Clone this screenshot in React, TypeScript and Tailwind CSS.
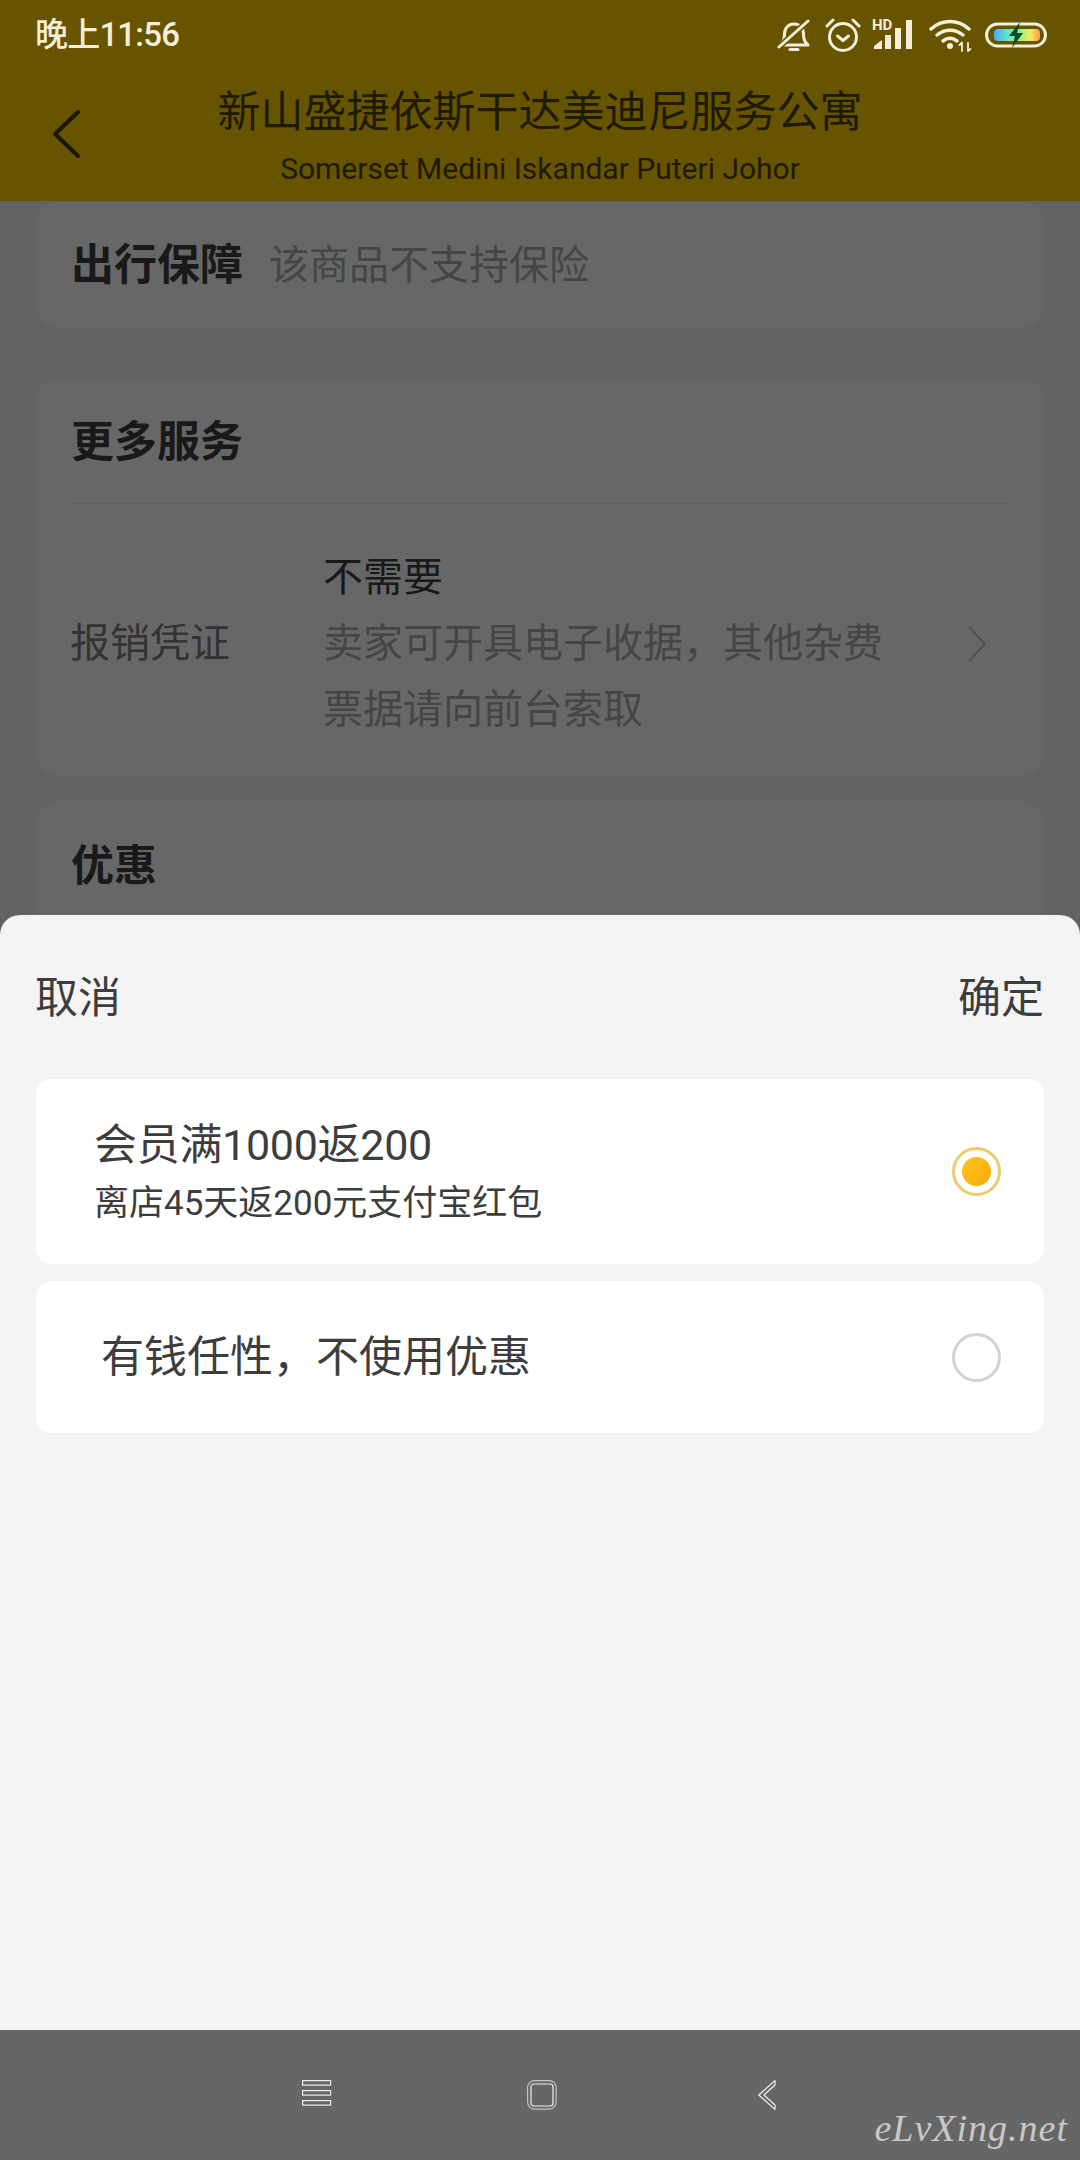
const cjk = "font-['Roboto','Noto_Sans_CJK_SC',sans-serif]";

function StatusIcons() {
  return (
    <div className="flex items-center">
      {/* muted bell */}
      <svg width="34" height="34" viewBox="0 0 34 34" fill="none" stroke="#f5eeda" strokeWidth="3" strokeLinecap="round" strokeLinejoin="round" className="mr-[14px]">
        <path d="M3 27h28c-3-3-4.500-5-4.500-11 0-6-4-10-9.500-10-5.500 0-9.500 4-9.500 10 0 6-1.500 8-4.500 11z" />
        <path d="M13 31.500h8" />
        <path d="M2 29L31 3" stroke="#665400" strokeWidth="6" />
        <path d="M2 29L31 3" />
      </svg>
      {/* alarm */}
      <svg width="36" height="36" viewBox="0 0 36 36" fill="none" stroke="#f5eeda" strokeWidth="3" strokeLinecap="round" strokeLinejoin="round" className="mr-[10px]">
        <circle cx="18" cy="20" r="13.500" />
        <path d="M12.500 19l5.500 4.500 5.500-4.500" />
        <path d="M2 9l6-6M34 9l-6-6" />
      </svg>
      {/* HD + signal, with a taller box so the label has room */}
      <svg width="44" height="48" viewBox="0 -8 44 48" fill="#f5eeda" className="mr-[14px]">
        <text x="1" y="11" fontSize="15" fontWeight="700" fontFamily="Roboto, sans-serif">HD</text>
        <path d="M3 30v-3l8-6v9z" />
        <rect x="14" y="16" width="6" height="14" />
        <rect x="24" y="9" width="6" height="21" />
        <rect x="35" y="1" width="6" height="29" />
      </svg>
      {/* wifi */}
      <svg width="44" height="34" viewBox="0 0 44 34" fill="none" stroke="#f5eeda" strokeWidth="3.500" strokeLinecap="round" className="mr-[12px]">
        <path d="M2 11C13 1 29 1 40 11" />
        <path d="M8 17c8-6.500 18-6.500 26 0" />
        <path d="M14 23c4.500-3.500 9.500-3.500 14 0" />
        <circle cx="21" cy="28" r="3" fill="#f5eeda" stroke="none" />
        <path d="M33 33v-8M30.500 27l2.500-2.500M39 25v8M41.500 31L39 33" strokeWidth="1.800" />
      </svg>
      {/* battery */}
      <svg width="62" height="28" viewBox="0 0 62 28" fill="none">
        <defs>
          <linearGradient id="batteryFill" x1="0" y1="0" x2="1" y2="0">
            <stop offset="0" stopColor="#4aa8f0" />
            <stop offset="0.3" stopColor="#63e6d0" />
            <stop offset="0.55" stopColor="#8ff27c" />
            <stop offset="0.8" stopColor="#fbe65e" />
            <stop offset="1" stopColor="#f59a4c" />
          </linearGradient>
        </defs>
        <rect x="1.500" y="3" width="59" height="22" rx="11" stroke="#f5eeda" strokeWidth="3" />
        <rect x="9" y="8" width="46" height="12" rx="4" fill="url(#batteryFill)" />
        <path d="M35 1L24 15h6l-3 12 11-15h-6z" fill="#0f4a2a" />
      </svg>
    </div>
  );
}

function Radio({ checked }: { checked?: boolean }) {
  if (checked) {
    return (
      <div className="w-[49px] h-[49px] rounded-full border-[3px] border-[#ecca70] flex items-center justify-center">
        <div className="w-[29px] h-[29px] rounded-full bg-gradient-to-br from-[#ffc61a] to-[#f9a60e]" />
      </div>
    );
  }
  return <div className="w-[49px] h-[49px] rounded-full border-[3px] border-[#d2d2d2] bg-white" />;
}

function NavIcons() {
  return (
    <>
      <svg width="30" height="26" viewBox="0 0 30 26" fill="none" stroke="#eeeeee" strokeWidth="1.200">
        <rect x="0.600" y="0.600" width="28" height="4.500" />
        <rect x="0.600" y="10.600" width="28" height="4.500" />
        <rect x="0.600" y="20.600" width="28" height="4.500" />
      </svg>
      <svg width="30" height="30" viewBox="0 0 30 30" fill="none" stroke="#eeeeee" strokeWidth="1.200" className="ml-[195px]">
        <rect x="0.600" y="0.600" width="28.500" height="28.500" rx="7" stroke="#c4c4c4" />
        <rect x="4" y="4" width="22" height="22" rx="3" />
      </svg>
      <svg width="18" height="30" viewBox="0 0 18 30" fill="none" stroke="#eeeeee" strokeWidth="1.200" className="ml-[201px]">
        <path d="M17 0.600L0.800 15 17 29.400V25L6 15 17 5z" strokeLinejoin="round" />
      </svg>
    </>
  );
}

export default function App() {
  return (
    <div className={`w-[1080px] h-[2160px] flex flex-col overflow-hidden bg-[#636363] ${cjk}`}>
      {/* top bar */}
      <div className="h-[201px] shrink-0 bg-[#665400] flex flex-col">
        <div className="h-[70px] flex items-center justify-between pl-[35px] pr-[33px]">
          <span className="text-[33px] font-medium text-[#f5eeda] tracking-[-0.8px]">晚上11:56</span>
          <StatusIcons />
        </div>
        <div className="flex items-start">
          <div className="w-[120px] pl-[51px] pt-[39px]">
            <svg width="30" height="52" viewBox="0 0 30 52" fill="none" stroke="#1b1700" strokeWidth="4" strokeLinecap="round" strokeLinejoin="round">
              <path d="M27 3L4 25l23 22" />
            </svg>
          </div>
          <div className="flex-1 flex flex-col items-center pt-[12px]">
            <div className="text-[43px] leading-[60px] whitespace-nowrap text-[#1f1a02]">新山盛捷依斯干达美迪尼服务公寓</div>
            <div className="text-[30px] leading-[40px] mt-[7px] whitespace-nowrap text-[#1f1a02]">Somerset Medini Iskandar Puteri Johor</div>
          </div>
          <div className="w-[120px]" />
        </div>
      </div>

      {/* dimmed page behind the sheet */}
      <div className="relative flex-1 overflow-hidden px-[36px] pt-[1px]">
        <div className="h-[126px] rounded-[24px] bg-[#676767] flex items-center px-[35px]">
          <span className="text-[43px] font-bold text-[#191919] mt-[1px]">出行保障</span>
          <span className="text-[40px] text-[#454545] ml-[26px] mt-[2px]">该商品不支持保险</span>
        </div>

        <div className="mt-[50px] h-[398px] rounded-[24px] bg-[#676767] px-[33px]">
          <div className="h-[126px] flex items-center border-b border-[#5f5f5f] pl-[2px]">
            <span className="text-[43px] font-bold text-[#191919] mt-[4px]">更多服务</span>
          </div>
          <div className="flex items-center pt-[41px] pl-[1px]">
            <span className="text-[40px] text-[#333333] w-[253px] shrink-0">报销凭证</span>
            <div className="w-[570px] text-[40px] leading-[66px]">
              <div className="text-[#191919]">不需要</div>
              <div className="text-[#454545]">卖家可开具电子收据，其他杂费</div>
              <div className="text-[#454545]">票据请向前台索取</div>
            </div>
            <svg width="20" height="38" viewBox="0 0 20 38" fill="none" stroke="#525252" strokeWidth="2" className="ml-[74px]">
              <path d="M2 2l16 17L2 36" />
            </svg>
          </div>
        </div>

        <div className="mt-[25px] h-[300px] rounded-[24px] bg-[#676767] px-[35px] pt-[33px]">
          <span className="text-[43px] font-bold text-[#191919]">优惠</span>
        </div>

        {/* coupon sheet */}
        <div className="absolute inset-x-0 top-[714px] bottom-0 rounded-t-[20px] bg-[#f4f4f4] px-[36px]">
          <div className="h-[164px] flex items-center justify-between text-[43px] text-[#3d3d3d] pt-[2px]">
            <span className="-ml-[1px]">取消</span>
            <span>确定</span>
          </div>
          <div className="h-[185px] rounded-[16px] bg-white flex items-center justify-between pl-[58px] pr-[43px]">
            <div className="flex flex-col text-[#3d3d3d]">
              <span className="text-[43px] leading-[60px] tracking-[-0.3px]">会员满1000返200</span>
              <span className="text-[35px] leading-[48px] mt-[5px]">离店45天返200元支付宝红包</span>
            </div>
            <Radio checked />
          </div>
          <div className="mt-[17px] h-[152px] rounded-[16px] bg-white flex items-center justify-between pl-[65px] pr-[43px]">
            <span className="text-[43px] text-[#3d3d3d]">有钱任性，不使用优惠</span>
            <Radio />
          </div>
        </div>
      </div>

      {/* system nav */}
      <div className="relative h-[130px] shrink-0 bg-[#666666] flex items-start pt-[50px] pl-[302px]">
        <NavIcons />
        <span className="absolute right-[12px] bottom-[10px] text-[38px] italic leading-[44px] text-[#c8c8c8] font-['Liberation_Serif',serif] tracking-[1px]">eLvXing.net</span>
      </div>
    </div>
  );
}
